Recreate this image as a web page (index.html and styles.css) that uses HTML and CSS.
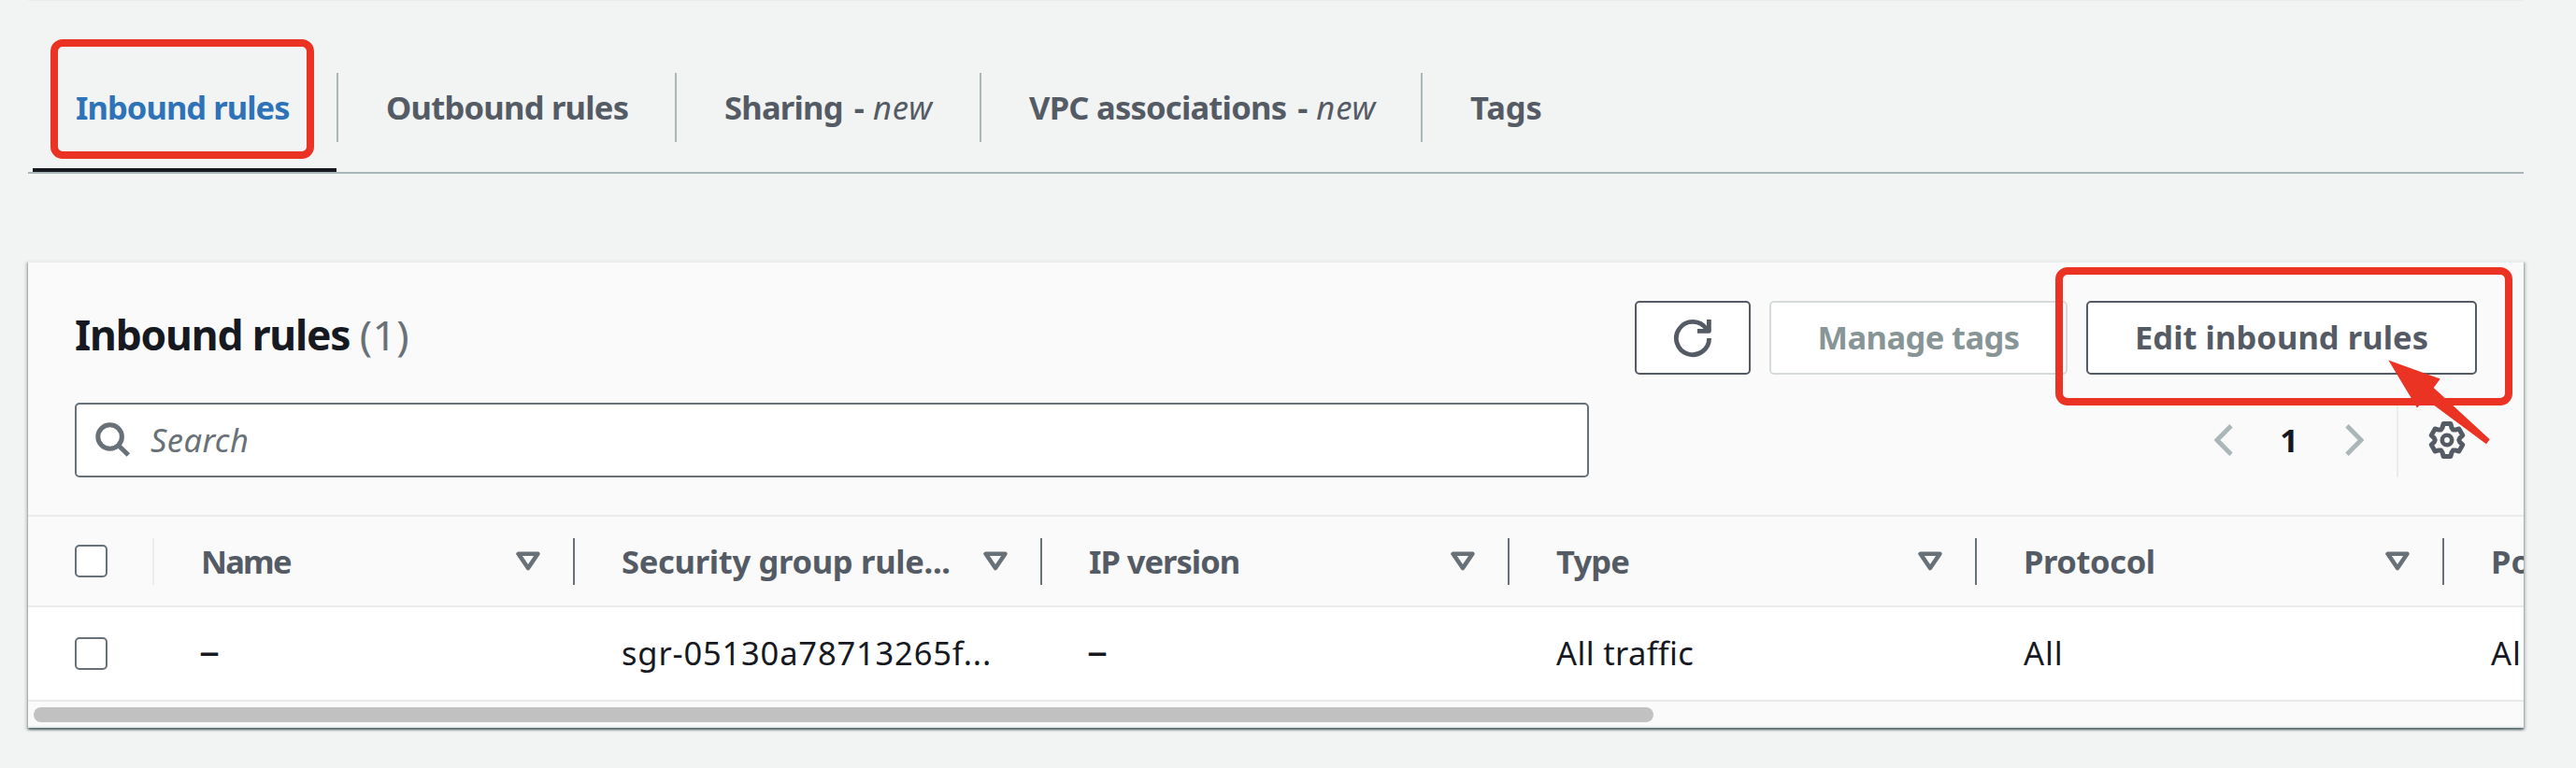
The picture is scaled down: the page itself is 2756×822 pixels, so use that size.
FILE: index.html
```html
<!DOCTYPE html>
<html lang="en">
<head>
<meta charset="utf-8">
<title>Inbound rules</title>
<link rel="stylesheet" href="styles.css">
</head>
<body>
<svg class="defs" aria-hidden="true">
  <symbol id="sort" viewBox="0 0 26 21"><path d="M2.6 2.8H23.4L13 18Z" fill="none" stroke="currentColor" stroke-width="4.6" stroke-linejoin="round"/></symbol>
</svg>
<main class="page">
  <nav class="tabs">
    <a class="tab tab-inbound active"><span class="label">Inbound rules</span></a>
    <a class="tab tab-outbound"><span class="label">Outbound rules</span></a>
    <a class="tab tab-sharing"><span class="label">Sharing</span><span class="dash">-</span><i>new</i></a>
    <a class="tab tab-vpc"><span class="label">VPC associations</span><span class="dash">-</span><i>new</i></a>
    <a class="tab tab-tags"><span>Tags</span></a>
  </nav>

  <section class="panel">
    <header class="panel-header">
      <div class="title-row">
        <h2 class="title">Inbound rules <span class="count">(1)</span></h2>
        <div class="actions">
          <button class="btn btn-refresh" aria-label="Refresh">
            <svg width="44" height="44" viewBox="0 0 44 44" fill="none" stroke="currentColor" stroke-width="4.8"><path d="M39.6 22A17.6 17.6 0 1 1 36.6 12.2"/><path d="M39.4 2V14.4H27" stroke-linejoin="round"/></svg>
          </button>
          <button class="btn btn-manage" disabled>Manage tags</button>
          <button class="btn btn-edit">Edit inbound rules</button>
        </div>
      </div>
      <div class="filter-row">
        <div class="search">
          <svg width="38" height="38" viewBox="0 0 38 38" fill="none" stroke="currentColor" stroke-width="5"><circle cx="15.6" cy="15.5" r="12.8"/><path d="M24.5 24.5L35.3 35"/></svg>
          <span class="placeholder">Search</span>
        </div>
        <div class="pager">
          <svg class="chevron" width="20" height="34" viewBox="0 0 20 34"><path d="M18 1.8L3 17L18 32.2"/></svg>
          <b class="page-number">1</b>
          <svg class="chevron" width="20" height="34" viewBox="0 0 20 34"><path d="M2 1.8L17 17L2 32.2"/></svg>
        </div>
        <div class="settings">
          <svg width="40" height="40" viewBox="0 0 40 40" fill="none" stroke="currentColor" stroke-width="5" stroke-linejoin="round"><path d="M15 6.9L16.1 2.6H23.9L25 6.9L26.4 8.9L28.8 9.1L32.8 8L36.8 14.9L33.8 17.8L32.8 20L33.8 22.2L36.8 25.1L32.8 32L28.8 30.9L26.4 31.1L25 33.1L23.9 37.4H16.1L15 33.1L13.6 31.1L11.2 30.9L7.2 32L3.2 25.1L6.2 22.2L7.2 20L6.2 17.8L3.2 14.9L7.2 8L11.2 9.1L13.6 8.9Z"/><circle cx="20" cy="20" r="5.2" stroke-width="4.6"/></svg>
        </div>
      </div>
    </header>

    <div class="table">
      <div class="row head">
        <div class="cell select"><span class="checkbox"></span></div>
        <div class="cell"><span class="h-name">Name</span><svg class="sort"><use href="#sort"/></svg></div>
        <div class="cell"><span class="h-group">Security group rule...</span><svg class="sort"><use href="#sort"/></svg></div>
        <div class="cell"><span class="h-ip">IP version</span><svg class="sort"><use href="#sort"/></svg></div>
        <div class="cell"><span class="h-type">Type</span><svg class="sort"><use href="#sort"/></svg></div>
        <div class="cell"><span class="h-protocol">Protocol</span><svg class="sort"><use href="#sort"/></svg></div>
        <div class="cell"><span>Port range</span></div>
      </div>
      <div class="row">
        <div class="cell select"><span class="checkbox"></span></div>
        <div class="cell empty">–</div>
        <div class="cell rule-id">sgr-05130a78713265f...</div>
        <div class="cell empty">–</div>
        <div class="cell traffic">All traffic</div>
        <div class="cell all">All</div>
        <div class="cell all">All</div>
      </div>
    </div>
    <div class="scrollbar"><div class="thumb"></div></div>
  </section>

  <div class="mark mark-tab"></div>
  <div class="mark mark-button"></div>
  <svg class="arrow" width="112" height="94" viewBox="0 0 112 94"><path d="M1.3 1.5L56.7 21.5L49.7 31L109.7 86.3L106 91.3L41 43L32 52.5Z" fill="#eb3323"/></svg>
</main>
</body>
</html>
```
FILE: styles.css
```css
* { box-sizing: border-box; }

body {
  margin: 0;
  background: #f2f3f3;
  color: #16191f;
  font: 34.5px/46px "Noto Sans", "Open Sans", sans-serif;
}

.defs { display: none; }

.page {
  position: relative;
  width: 2756px;
  height: 822px;
  padding: 0 56px 0 30px;
  overflow: hidden;
}

/* Tabs */
.tabs {
  display: flex;
  height: 186px;
  padding-top: 78px;
  border-top: 1px solid #eaeded;
  border-bottom: 2px solid #aab7b8;
}
.tab {
  display: flex;
  align-items: center;
  position: relative;
  height: 74px;
  margin-top: -1px;
  padding-left: 51px;
  border-right: 2px solid #aab7b8;
  color: #545b64;
  font-weight: 700;
  white-space: pre;
}
.tab .label { letter-spacing: -0.75px; }
.tab-inbound { width: 332px; }
.tab-inbound .label { letter-spacing: -0.95px; }
.tab-outbound { width: 362px; }
.tab-sharing { width: 326px; }
.tab-vpc { width: 472px; }
.tab-tags { border-right: 0; }
.tab .dash { margin: 0 9px 0 12px; }
.tab i { font-weight: 400; letter-spacing: 0.9px; }
.tab.active { color: #2e73b8; }
.tab.active::after {
  content: "";
  position: absolute;
  left: 5px;
  right: 0;
  bottom: -32px;
  height: 4px;
  background: #16191f;
}

/* Panel */
.panel {
  margin-top: 93px;
  height: 500px;
  border-top: 2px solid #eaeded;
  border-bottom: 2px solid #eaeded;
  background: #fafafa;
  box-shadow: 0 2px 2px 0 rgba(0, 28, 36, 0.5), 2px 2px 3px 0 rgba(0, 28, 36, 0.2), -2px 2px 3px 0 rgba(0, 28, 36, 0.2);
}
.panel-header {
  height: 272px;
  padding: 41px 50px 0;
  border-bottom: 2px solid #eaeded;
}
.title-row { display: flex; justify-content: space-between; height: 79px; }
.title {
  margin: 6px 0 0;
  font-size: 44.4px;
  line-height: 60px;
  letter-spacing: -1.2px;
}
.count { color: #687078; font-weight: 400; letter-spacing: 0.4px; }
.actions { display: flex; gap: 20px; }
.btn {
  display: flex;
  align-items: center;
  justify-content: center;
  height: 79px;
  padding: 0 0 2px;
  border: 2px solid #545b64;
  border-radius: 5px;
  background: #fff;
  color: #545b64;
  font: inherit;
  font-weight: 700;
}
.btn-refresh { width: 124px; padding: 0; }
.btn-manage { width: 319px; letter-spacing: -0.6px; }
.btn-edit { width: 418px; letter-spacing: 0.05px; }
.btn:disabled { border-color: #d5dbdb; color: #879596; }

.filter-row { display: flex; height: 80px; margin-top: 30px; }
.search {
  display: flex;
  align-items: center;
  gap: 21px;
  width: 1620px;
  padding-left: 20px;
  border: 2px solid #687078;
  border-radius: 5px;
  background: #fff;
  color: #687078;
}
.placeholder { font-style: italic; letter-spacing: 0.4px; }
.pager { display: flex; align-items: center; justify-content: space-between; width: 160px; margin-left: 669px; }
.chevron { fill: none; stroke: #aab7b8; stroke-width: 4.8; }
.settings {
  display: flex;
  align-items: center;
  margin-left: 35px;
  padding-left: 32px;
  border-left: 2px solid #eaeded;
  color: #545b64;
}

/* Table */
.table { overflow: hidden; }
.row {
  display: grid;
  grid-template-columns: 135px 450px repeat(5, 500px);
  height: 101px;
  border-bottom: 2px solid #e9ebeb;
  background: #fff;
}
.cell {
  display: flex;
  align-items: center;
  padding: 0 0 2px 50px;
  white-space: nowrap;
}
.row .select { padding-bottom: 0; }
.head { height: 97px; background: #fafafa; color: #545b64; font-weight: 700; }
.head .cell {
  justify-content: space-between;
  height: 50px;
  margin-top: 23px;
  padding: 0 35px 1px 50px;
  border-right: 2px solid #687078;
}
.head .select { border-color: #eaeded; }
.checkbox {
  width: 35px;
  height: 35px;
  flex: none;
  border: 2.5px solid #687078;
  border-radius: 5px;
  background: #fff;
}
.sort { width: 26px; height: 21px; color: #687078; }
.h-name { letter-spacing: -1.8px; }
.h-group { letter-spacing: -0.3px; }
.h-ip { letter-spacing: -1px; }
.h-type { letter-spacing: -0.8px; }
.h-protocol { letter-spacing: -0.4px; }
.empty { font-size: 44px; padding-left: 48px; padding-bottom: 10px; }
.rule-id { letter-spacing: 0.82px; }
.traffic { letter-spacing: 0.35px; }
.all { letter-spacing: 0.9px; }

.scrollbar { padding: 6px; }
.thumb { width: 1733px; height: 16px; border-radius: 8px; background: #c1c1c1; }

/* Callouts drawn over the console */
.mark {
  position: absolute;
  border: 8px solid #eb3323;
  border-radius: 13px;
}
.mark-tab { left: 54px; top: 42px; width: 282px; height: 128px; }
.mark-button { left: 2199px; top: 286px; width: 489px; height: 148px; }
.arrow { position: absolute; left: 2554px; top: 384px; }
```
